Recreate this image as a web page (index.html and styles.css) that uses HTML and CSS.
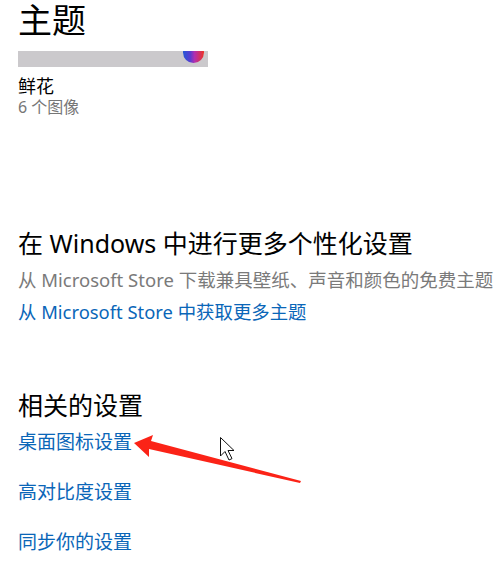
FILE: index.html
```html
<!DOCTYPE html>
<html lang="zh-CN">
<head>
    <meta charset="UTF-8">
    <title>主题</title>
    <link rel="stylesheet" href="styles.css">
</head>
<body>
    <div class="page">
        <h1 class="page-title">主题</h1>

        <div class="theme-preview">
            <div class="theme-swatch"></div>
        </div>
        <div class="theme-name">鲜花</div>
        <div class="theme-meta">6 个图像</div>

        <!-- 更多个性化 -->
        <h2 class="section-title more">在 Windows 中进行更多个性化设置</h2>
        <p class="section-desc">从 Microsoft Store 下载兼具壁纸、声音和颜色的免费主题</p>
        <a class="link store-link" href="#">从 Microsoft Store 中获取更多主题</a>

        <!-- 相关的设置 -->
        <h2 class="section-title related">相关的设置</h2>
        <div class="link-list">
            <a class="link" href="#">桌面图标设置</a>
            <a class="link" href="#">高对比度设置</a>
            <a class="link" href="#">同步你的设置</a>
        </div>
    </div>

    <svg class="overlay" width="503" height="570" viewBox="0 0 503 570">
        <polygon fill="#fb2317" points="134,443 153,435 151,441 301,481 300,483 149,449 149,457"/>
        <path fill="#fff" stroke="#111" stroke-width="1" stroke-linejoin="round"
              d="M220.5,437.5 L220.5,456 L225,451.5 L229,460 L232,458.6 L228,450.5 L234,450.5 Z"/>
    </svg>
</body>
</html>
```

FILE: styles.css
```css
* {
    margin: 0;
    padding: 0;
    box-sizing: border-box;
}

body {
    font-family: "Noto Sans", "Noto Sans CJK SC", sans-serif;
    background: #fff;
    color: #000;
    position: relative;
}

.page {
    display: flex;
    flex-direction: column;
    align-items: flex-start;
    padding-left: 18px;
}

.page-title {
    font-size: 34px;
    font-weight: 400;
    line-height: 41px;
}

.theme-preview {
    position: relative;
    width: 190px;
    height: 16px;
    margin-top: 10px;
    background: #cbc9cc;
    overflow: hidden;
}

.theme-swatch {
    position: absolute;
    left: 165px;
    top: -9px;
    width: 21px;
    height: 21px;
    border-radius: 50%;
    background: linear-gradient(90deg, #2457d6 0%, #5a3cd0 35%, #b12fb0 55%, #ee3324 100%);
}

.theme-name {
    font-size: 18px;
    line-height: 22px;
    margin-top: 8px;
}

.theme-meta {
    font-size: 16px;
    line-height: 20px;
    color: #767676;
}

.section-title {
    font-size: 25px;
    font-weight: 400;
    line-height: 32px;
}

.section-title.more {
    margin-top: 110px;
}

.section-title.related {
    margin-top: 64px;
}

.section-desc {
    font-size: 18.5px;
    line-height: 24px;
    color: #7a7a7a;
    margin-top: 9px;
    white-space: nowrap;
}

.link {
    font-size: 19px;
    line-height: 26px;
    color: #0a66b8;
    text-decoration: none;
    white-space: nowrap;
}

.store-link {
    font-size: 18.4px;
    margin-top: 7px;
}

.link-list {
    display: flex;
    flex-direction: column;
    gap: 24px;
    margin-top: 8px;
}

.overlay {
    position: absolute;
    left: 0;
    top: 0;
    pointer-events: none;
}
```
